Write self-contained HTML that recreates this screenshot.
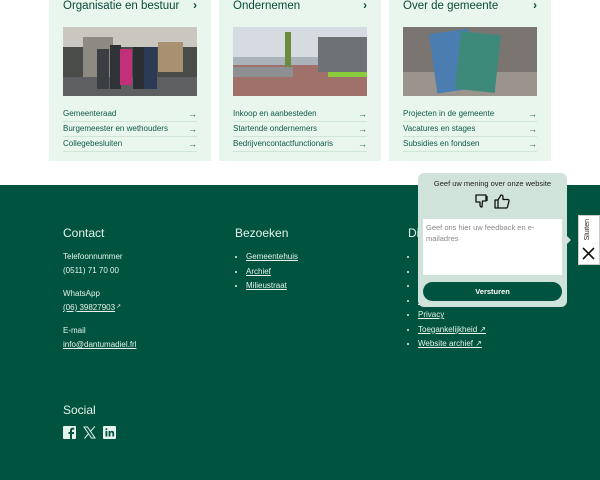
<!DOCTYPE html>
<html><head><meta charset="utf-8"><style>
*{margin:0;padding:0;box-sizing:border-box}
body{width:600px;height:480px;overflow:hidden;background:#fff;font-family:"Liberation Sans",sans-serif;position:relative}
.card{position:absolute;top:0;width:162px;height:161px;background:#e9f6ee}
.card h3{position:absolute;left:14px;top:0;font-size:11.5px;font-weight:normal;color:#0a4a3a;width:134px}
.card h3 span{position:absolute;right:0;font-weight:bold}
.img{position:absolute;left:14px;top:27px;width:134px;height:69px}
.links{position:absolute;left:14px;top:107px;width:134px}
.links div{height:15px;border-bottom:1px solid #cfe5d8;font-size:8px;color:#0f5a46;line-height:14px;position:relative}
.links div:after{content:"\2192";position:absolute;right:0;top:0;font-size:9px}
footer{position:absolute;top:185px;left:0;width:600px;height:295px;background:#00533f;color:#e6f2ec}
footer h4{position:absolute;font-size:12px;font-weight:normal}
.t{position:absolute;font-size:8px;color:#e6f2ec}
.u{text-decoration:underline}
ul{position:absolute;font-size:8px;list-style:disc;padding-left:10px}
ul li{height:14.5px;text-decoration:underline}
</style></head><body>
<div class="card" style="left:49px"><h3>Organisatie en bestuur<span>›</span></h3>
<svg class="img" viewBox="0 0 134 69"><rect width="134" height="69" fill="#4a4c4a"/><rect x="0" y="0" width="134" height="20" fill="#c9c7c0"/><rect x="20" y="10" width="30" height="45" fill="#8d8a82"/><rect x="95" y="15" width="25" height="30" fill="#a89070"/><rect x="0" y="50" width="134" height="19" fill="#5d5f60"/><rect x="34" y="22" width="12" height="40" fill="#3b3e42"/><rect x="47" y="18" width="11" height="44" fill="#2f3338"/><rect x="57" y="22" width="12" height="36" fill="#c2307a"/><rect x="70" y="20" width="11" height="42" fill="#2b2e33"/><rect x="81" y="20" width="13" height="42" fill="#2d3a55"/></svg>
<div class="links"><div>Gemeenteraad</div><div>Burgemeester en wethouders</div><div>Collegebesluiten</div></div></div>
<div class="card" style="left:219px"><h3>Ondernemen<span>›</span></h3>
<svg class="img" viewBox="0 0 134 69"><rect width="134" height="69" fill="#aab3ba"/><rect y="0" width="134" height="30" fill="#d5dbe0"/><rect y="38" width="134" height="31" fill="#a0706a"/><rect x="85" y="10" width="49" height="35" fill="#6d7275"/><rect x="0" y="40" width="60" height="10" fill="#8d8f93"/><rect x="52" y="5" width="6" height="35" fill="#6a8a3e"/><rect x="95" y="45" width="39" height="5" fill="#8acb3c"/></svg>
<div class="links"><div>Inkoop en aanbesteden</div><div>Startende ondernemers</div><div>Bedrijvencontactfunctionaris</div></div></div>
<div class="card" style="left:389px"><h3>Over de gemeente<span>›</span></h3>
<svg class="img" viewBox="0 0 134 69"><rect width="134" height="69" fill="#7a7570"/><rect x="0" y="45" width="134" height="24" fill="#9b948c"/><rect x="30" y="4" width="40" height="60" fill="#4b7db0" transform="rotate(-8 50 34)"/><rect x="55" y="6" width="40" height="58" fill="#3e8a7a" transform="rotate(6 75 34)"/></svg>
<div class="links"><div>Projecten in de gemeente</div><div>Vacatures en stages</div><div>Subsidies en fondsen</div></div></div>
<footer>
<h4 style="left:63px;top:41px">Contact</h4>
<div class="t" style="left:63px;top:67px">Telefoonnummer</div>
<div class="t" style="left:63px;top:81px">(0511) 71 70 00</div>
<div class="t" style="left:63px;top:104px">WhatsApp</div>
<div class="t u" style="left:63px;top:118px">(06) 39827903</div><div class="t" style="left:116px;top:118px;font-size:6px">↗</div>
<div class="t" style="left:63px;top:141px">E-mail</div>
<div class="t u" style="left:63px;top:155px">info@dantumadiel.frl</div>
<h4 style="left:235px;top:41px">Bezoeken</h4>
<ul style="left:236px;top:67px"><li>Gemeentehuis</li><li>Archief</li><li>Milieustraat</li></ul>
<h4 style="left:408px;top:41px">Digitaal</h4>
<ul style="left:408px;top:67px"><li>Burgerzaken</li><li>Nieuws</li><li>Meldingen</li><li>Proclaimer</li><li>Privacy</li><li>Toegankelijkheid ↗</li><li>Website archief ↗</li></ul>
<h4 style="left:63px;top:218px">Social</h4>
<svg style="position:absolute;left:63px;top:241px" width="13" height="13" viewBox="0 0 13 13"><rect width="13" height="13" rx="1" fill="#e6f2ec"/><path d="M9 13V8h2V6H9V4.5c0-.6.3-.9 1-.9h1.2V1.8H9.6C8 1.8 7 2.8 7 4.4V6H5.5v2H7v5z" fill="#00533f"/></svg>
<svg style="position:absolute;left:83px;top:241px" width="13" height="13" viewBox="0 0 13 13"><path d="M1 1h3.5l7.5 11H8.5z" fill="none" stroke="#e6f2ec" stroke-width="1"/><path d="M1.5 12.5L5.8 7.3M7.3 5.6L11.8.5" stroke="#e6f2ec" stroke-width="1"/></svg>
<svg style="position:absolute;left:103px;top:241px" width="13" height="13" viewBox="0 0 13 13"><rect width="13" height="13" rx="1" fill="#e6f2ec"/><rect x="2.5" y="5" width="1.8" height="5.5" fill="#00533f"/><circle cx="3.4" cy="3.2" r="1" fill="#00533f"/><path d="M5.6 5h1.7v.9c.4-.7 1.1-1 1.9-1 1.3 0 1.9.8 1.9 2.3v3.3H9.4V7.6c0-.8-.3-1.2-.9-1.2-.7 0-1.1.5-1.1 1.3v2.8H5.6z" fill="#00533f"/></svg>
</footer>
<div style="position:absolute;left:418px;top:173px;width:149px;height:134px;background:#cfe3da;border-radius:6px"></div>
<div style="position:absolute;left:418px;top:179px;width:149px;text-align:center;font-size:7.5px;color:#222">Geef uw mening over onze website</div>
<svg style="position:absolute;left:474px;top:193px" width="38" height="16" viewBox="0 0 38 16"><path d="M2 2h10v6H8.5l-.5 6c-1.2 0-2-.8-2-2V9H2z" fill="none" stroke="#111" stroke-width="1.3" stroke-linejoin="round"/><path d="M13 3v5" stroke="#111" stroke-width="1.3"/><path d="M21 7h3v8h-3zM24 7l3-5c1.2 0 2 .8 2 2v2.5h5c.8 0 1.2.7 1 1.4l-1.5 6c-.2.7-.7 1.1-1.4 1.1H24" fill="none" stroke="#111" stroke-width="1.3" stroke-linejoin="round"/></svg>
<div style="position:absolute;left:423px;top:219px;width:139px;height:56px;background:#fff;font-size:7.5px;color:#888;padding:3px;line-height:11px">Geef ons hier uw feedback en e-mailadres</div>
<div style="position:absolute;left:423px;top:282px;width:139px;height:19px;background:#00533f;border-radius:10px;color:#fff;font-size:7.5px;font-weight:bold;text-align:center;line-height:19px">Versturen</div>
<div style="position:absolute;left:567px;top:236px;width:0;height:0;border:4px solid transparent;border-left-color:#cfe3da"></div>
<div style="position:absolute;left:578px;top:215px;width:22px;height:50px;background:#fff;border:1px solid #ccc"></div>
<div style="position:absolute;left:584px;top:219px;font-size:7px;color:#222;writing-mode:vertical-rl;transform:rotate(180deg)">Sluiten</div>
<svg style="position:absolute;left:582px;top:247px" width="13" height="13" viewBox="0 0 13 13"><path d="M1 1l11 11M12 1L1 12" stroke="#111" stroke-width="1.6"/></svg>
</body></html>
